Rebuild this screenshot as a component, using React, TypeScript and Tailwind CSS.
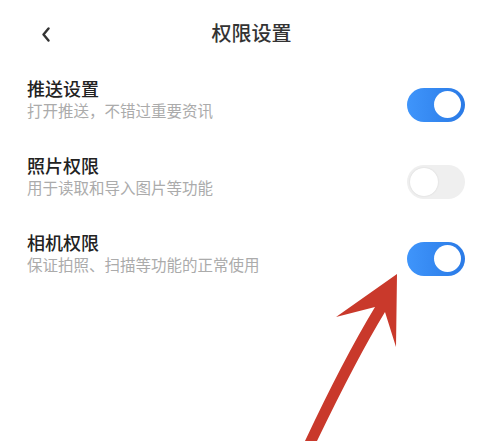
import React from "react";

const font = { fontFamily: '"Noto Sans CJK SC", "Noto Sans", sans-serif' };

type Row = { title: string; desc: string; on: boolean };

const rows: Row[] = [
  { title: "推送设置", desc: "打开推送，不错过重要资讯", on: true },
  { title: "照片权限", desc: "用于读取和导入图片等功能", on: false },
  { title: "相机权限", desc: "保证拍照、扫描等功能的正常使用", on: true },
];

function Toggle({ on }: { on: boolean }) {
  return on ? (
    <div className="w-[58px] h-[34px] rounded-full bg-gradient-to-r from-[#3f95fb] to-[#2a7ae6] flex items-center justify-end pr-[4px] shrink-0">
      <div className="w-[27px] h-[27px] rounded-full bg-white" />
    </div>
  ) : (
    <div className="w-[58px] h-[34px] rounded-full bg-[#efefef] flex items-center justify-start pl-[3px] shrink-0">
      <div className="w-[28px] h-[28px] rounded-full bg-white shadow-[0_0_2px_rgba(0,0,0,0.12)]" />
    </div>
  );
}

export default function App() {
  return (
    <div className="relative w-[502px] h-[441px] overflow-hidden bg-white" style={font}>
      {/* Header */}
      <div className="relative h-[66px] flex items-center justify-center">
        <svg className="absolute left-[41px] top-[27px]" width="10" height="15" viewBox="0 0 10 15">
          <path d="M7.5 1.5 L2.5 7.5 L7.5 13.5" fill="none" stroke="#333" strokeWidth="2.4" strokeLinecap="round" strokeLinejoin="round" />
        </svg>
        <h1 className="text-[20px] leading-[26px] font-medium text-[#333] ml-[1px]">权限设置</h1>
      </div>

      {/* Rows */}
      {rows.map((r) => (
        <div key={r.title} className="h-[77px] flex items-center pl-[27px] pr-[37px]">
          <div className="flex-1 pb-[12px]">
            <div className="text-[18px] leading-[22px] font-medium text-[#222]">{r.title}</div>
            <div className="text-[15.5px] leading-[21px] mt-[1px] text-[#ababab]">{r.desc}</div>
          </div>
          <Toggle on={r.on} />
        </div>
      ))}

      {/* Annotation arrow */}
      <svg className="absolute left-0 top-0 pointer-events-none" width="502" height="441" viewBox="0 0 502 441">
        <path
          d="M397 274 L396 347 L385 312 Q357 358 317 441 L305 441 Q343 360 375 307 L336 317 Z"
          fill="#c9392b"
        />
      </svg>
    </div>
  );
}
